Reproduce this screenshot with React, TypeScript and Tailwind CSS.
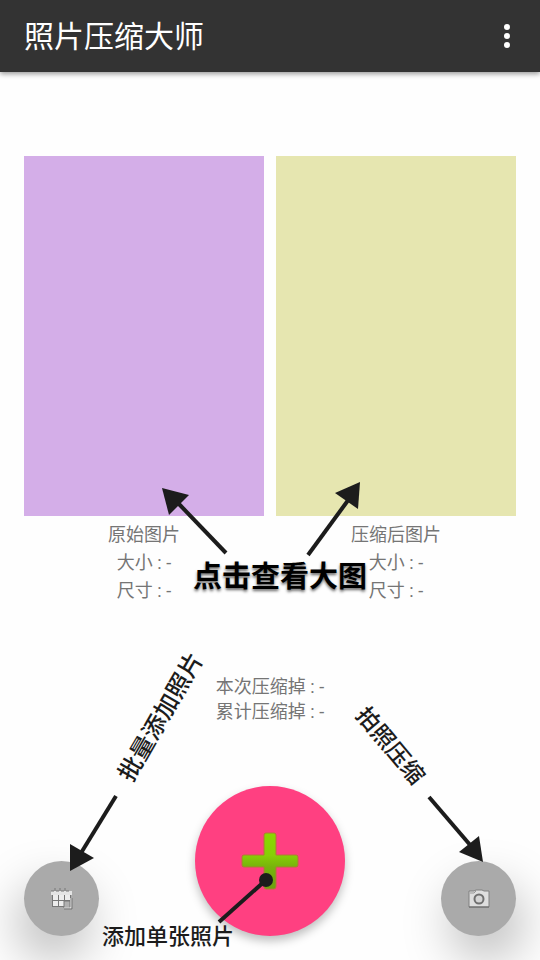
import React from "react";

function PhotoPanel({ title, label, tone }: { title: string; label: string; tone: string }) {
  return (
    <section className="min-w-0 flex-1">
      <button type="button" aria-label={label} className={`block aspect-2/3 w-full ${tone}`} />
      <div className="mt-[5px] text-center text-lg leading-7 text-[#757575]">
        <h2>{title}</h2>
        <p>大小 : -</p>
        <p>尺寸 : -</p>
      </div>
    </section>
  );
}

function CalendarIcon() {
  return (
    <svg aria-hidden="true" width="24" height="24" viewBox="0 0 24 24" fill="none">
      <path d="M1 4h21v4H1z" fill="#e4e4e4" />
      <path d="M1 4h3M6 4h3M11 4h3M16 4h3M5 1v3M10 1v3M15 1v3" stroke="#777" />
      <path d="M2 8h19v12H2z" fill="#777" />
      <path d="M3 8h5v5H3zM9 8h5v5H9zM15 8h5v5h-5zM3 14h5v5H3zM9 14h5v5H9z" fill="#ececec" />
      <path d="M14 14h6v7h-6z" fill="#b0b0b0" stroke="#777" />
      <path d="M21 11v10h-7" stroke="#f2f2f2" />
      <path d="M22 11v11h-8" stroke="#777" />
    </svg>
  );
}

function CameraIcon() {
  return (
    <svg aria-hidden="true" width="24" height="24" viewBox="0 0 24 24" fill="none">
      <path d="M2 4h5l2-1h6l2 1h5v16H2z" fill="#dedede" stroke="#808080" />
      <path d="M3 6h4l2-2" stroke="#999" />
      <circle cx="12" cy="12" r="4.5" fill="#d5d5d5" stroke="#707070" strokeWidth="2" />
      <path d="M2 20h20" stroke="#666" />
    </svg>
  );
}

function PlusIcon() {
  return (
    <svg aria-hidden="true" width="64" height="64" viewBox="0 0 64 64">
      <defs>
        <linearGradient id="plus" x1="0" y1="0" x2="0" y2="1">
          <stop offset="0" stopColor="#8ad800" />
          <stop offset="0.4" stopColor="#86cf06" />
          <stop offset="0.6" stopColor="#78b40c" />
          <stop offset="1" stopColor="#6ca010" />
        </linearGradient>
      </defs>
      <path
        d="M28 4h8q2 0 2 2v20h20q2 0 2 2v8q0 2-2 2H38v19q0 3-2 3h-8q-2 0-2-3V38H6q-2 0-2-2v-8q0-2 2-2h20V6q0-2 2-2z"
        fill="url(#plus)"
        stroke="#b07836"
        strokeWidth="1"
      />
    </svg>
  );
}

function Guide() {
  return (
    <div className="pointer-events-none absolute top-0 left-1/2 h-[960px] w-[540px] -translate-x-1/2 leading-none font-medium whitespace-nowrap text-[#1c1c1c]">
      <svg aria-hidden="true" className="absolute inset-0" width="540" height="960" viewBox="0 0 540 960">
        <g stroke="#1c1c1c" strokeWidth="4">
          <path d="M226 553 178 503" />
          <path d="M308 555 349 499" />
          <path d="M116 796 81 853" />
          <path d="M429 797 471 846" />
          <path d="M219 922 266 880" />
        </g>
        <g fill="#1c1c1c">
          <path d="M162 488 189 495 169 515z" />
          <path d="M360 482 335 493 358 509z" />
          <path d="M70 871 70 844 94 858z" />
          <path d="M483 862 459 852 479 836z" />
          <circle cx="266" cy="880" r="7" />
        </g>
      </svg>
      <span className="absolute top-[577px] left-[280px] -translate-1/2 text-[29px] font-bold text-black [text-shadow:0_2px_3px_rgb(0_0_0/0.6)]">点击查看大图</span>
      <span className="absolute top-[717px] left-[161px] -translate-1/2 -rotate-60 text-2xl">批量添加照片</span>
      <span className="absolute top-[746px] left-[390px] -translate-1/2 rotate-50 text-[23px]">拍照压缩</span>
      <span className="absolute top-[937px] left-[168px] -translate-1/2 text-[22px]">添加单张照片</span>
    </div>
  );
}

export default function App() {
  return (
    <div className="relative flex min-h-screen flex-col overflow-hidden bg-[#fefefe] font-[Roboto,'Noto_Sans_CJK_SC',sans-serif]">
      <header className="flex h-18 items-center justify-between bg-[#333] pr-3 pl-6 text-white shadow-[0_2px_5px_rgb(0_0_0/0.4)]">
        <h1 className="pt-0.5 text-3xl">照片压缩大师</h1>
        <button type="button" aria-label="更多" className="flex h-12 w-[42px] items-center justify-center">
          <svg aria-hidden="true" width="6" height="24" viewBox="0 0 6 24" fill="currentColor">
            <circle cx="3" cy="3" r="3" />
            <circle cx="3" cy="12" r="3" />
            <circle cx="3" cy="21" r="3" />
          </svg>
        </button>
      </header>

      <main className="flex flex-1 flex-col">
        <div className="flex gap-3 px-6 pt-[84px]">
          <PhotoPanel title="原始图片" label="查看原始图片" tone="bg-[#d4aee8]" />
          <PhotoPanel title="压缩后图片" label="查看压缩后图片" tone="bg-[#e6e6b0]" />
        </div>
        <div className="mt-[69px] text-center text-lg leading-[25px] text-[#757575]">
          <p>本次压缩掉 : -</p>
          <p>累计压缩掉 : -</p>
        </div>
      </main>

      <footer className="flex items-end justify-between px-6 pb-6">
        <button type="button" aria-label="批量添加" className="flex size-[75px] items-center justify-center rounded-full bg-[#aaa] shadow-[-8px_24px_48px_rgb(0_0_0/0.25)]">
          <CalendarIcon />
        </button>
        <button type="button" aria-label="添加" className="flex size-[150px] items-center justify-center rounded-full bg-[#ff4081] shadow-[0_5px_10px_rgb(0_0_0/0.25)]">
          <PlusIcon />
        </button>
        <button type="button" aria-label="拍照" className="flex size-[75px] items-center justify-center rounded-full bg-[#aaa] shadow-[8px_24px_48px_rgb(0_0_0/0.25)]">
          <CameraIcon />
        </button>
      </footer>

      <Guide />
    </div>
  );
}
